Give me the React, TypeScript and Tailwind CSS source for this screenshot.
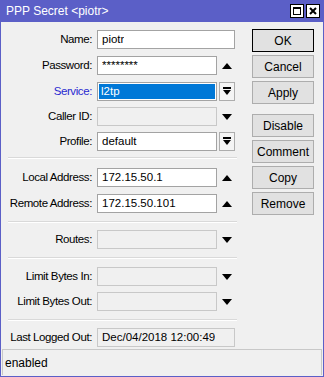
const font = { fontFamily: '"Liberation Sans", Arial, sans-serif' };

function Up() {
  return (
    <svg width="10" height="6" viewBox="0 0 10 6">
      <path d="M0 6 L5 0 L10 6 Z" fill="#000" />
    </svg>
  );
}

function Down() {
  return (
    <svg width="10" height="6" viewBox="0 0 10 6">
      <path d="M0 0 L10 0 L5 6 Z" fill="#000" />
    </svg>
  );
}

function DropBtn() {
  return (
    <div className="ml-[2px] w-[16px] h-full border border-[#adadad] bg-[#f4f4f4] flex items-center justify-center">
      <svg width="8" height="9" viewBox="0 0 8 9">
        <rect x="0" y="0" width="8" height="2" fill="#000" />
        <path d="M0 3 L8 3 L4 8 Z" fill="#000" />
      </svg>
    </div>
  );
}

type RowProps = {
  label: string;
  value?: string;
  kind: "edit" | "disabled" | "select" | "full" | "readonly" | "selected";
  arrow?: "up" | "down";
  blue?: boolean;
  className?: string;
};

function Row({ label, value, kind, arrow, blue, className }: RowProps) {
  const narrow = kind !== "full" && kind !== "readonly";
  const box =
    kind === "disabled" || kind === "readonly"
      ? "border-[#c8c8c8] bg-[#f0f0f0]"
      : "border-[#a3a3a3] bg-white";
  return (
    <div className={"flex items-center h-[19px] " + (className ?? "")}>
      <div
        className={
          "w-[92px] text-right pr-[1px] text-[11.5px] tracking-[-0.4px] " +
          (blue ? "text-[#2a2ad0]" : "text-black")
        }
      >
        {label}
      </div>
      <div
        className={
          "ml-[4px] h-full border flex items-center " +
          box +
          (narrow ? " w-[120px]" : " w-[138px]") +
          (kind === "selected" ? " p-[1px]" : " px-[4px]")
        }
      >
        {kind === "selected" ? (
          <div className="w-full h-full bg-[#0078d7] text-white px-[2px] flex items-center">{value}</div>
        ) : (
          <span className="truncate">{value}</span>
        )}
      </div>
      {kind === "selected" || kind === "select" ? (
        <DropBtn />
      ) : narrow ? (
        <div className="w-[19px] flex items-center justify-center">
          {arrow === "up" ? <Up /> : <Down />}
        </div>
      ) : null}
    </div>
  );
}

function Sep({ className }: { className?: string }) {
  return <div className={"ml-[7px] w-[229px] border-t border-[#d9d9d9] border-b border-b-white " + (className ?? "")} />;
}

function Btn({ label, primary, className }: { label: string; primary?: boolean; className?: string }) {
  return (
    <div
      className={
        "h-[23px] w-[62px] flex items-center justify-center bg-[#e1e1e1] border text-[12px] " +
        (primary ? "border-black" : "border-[#adadad]") +
        " " +
        (className ?? "")
      }
    >
      {label}
    </div>
  );
}

export default function App() {
  return (
    <div className="w-[324px] h-[377px] bg-[#5b5fc7] flex flex-col text-[11.5px] text-black" style={font}>
      {/* title bar */}
      <div className="h-[22px] flex items-center pl-[6px] pr-[4px] text-white text-[12px]">
        <span>PPP Secret &lt;piotr&gt;</span>
        <div className="ml-auto flex gap-[2px]">
          <div className="w-[14px] h-[14px] bg-white border border-black flex items-center justify-center">
            <div className="w-[8px] h-[8px] border border-black border-t-2" />
          </div>
          <div className="w-[14px] h-[14px] bg-white border border-black flex items-center justify-center">
            <svg width="8" height="8" viewBox="0 0 8 8">
              <path d="M1 1 L7 7 M7 1 L1 7" stroke="#000" strokeWidth="2" />
            </svg>
          </div>
        </div>
      </div>

      {/* body */}
      <div className="flex-1 mx-[1px] mb-[1px] bg-[#f0f0f0] flex flex-col">
        <div className="flex-1 flex pt-[7px]">
          <div className="w-[251px] flex flex-col pt-[1px]">
            <Row label="Name:" value="piotr" kind="full" />
            <Row label="Password:" value="********" kind="edit" arrow="up" className="mt-[7px]" />
            <Row label="Service:" value="l2tp" kind="selected" blue className="mt-[7px]" />
            <Row label="Caller ID:" kind="disabled" arrow="down" className="mt-[6px]" />
            <Row label="Profile:" value="default" kind="select" className="mt-[6px]" />
            <Sep className="mt-[6px]" />
            <Row label="Local Address:" value="172.15.50.1" kind="edit" arrow="up" className="mt-[9px]" />
            <Row label="Remote Address:" value="172.15.50.101" kind="edit" arrow="up" className="mt-[7px]" />
            <Sep className="mt-[8px]" />
            <Row label="Routes:" kind="disabled" arrow="down" className="mt-[7px]" />
            <Sep className="mt-[8px]" />
            <Row label="Limit Bytes In:" kind="disabled" arrow="down" className="mt-[8px]" />
            <Row label="Limit Bytes Out:" kind="disabled" arrow="down" className="mt-[6px]" />
            <Sep className="mt-[8px]" />
            <Row label="Last Logged Out:" value="Dec/04/2018 12:00:49" kind="readonly" className="mt-[7px]" />
          </div>
          <div className="flex flex-col">
            <Btn label="OK" primary />
            <Btn label="Cancel" className="mt-[3px]" />
            <Btn label="Apply" className="mt-[3px]" />
            <Btn label="Disable" className="mt-[10px]" />
            <Btn label="Comment" className="mt-[3px]" />
            <Btn label="Copy" className="mt-[3px]" />
            <Btn label="Remove" className="mt-[3px]" />
          </div>
        </div>
        <div className="h-[26px] mx-[1px] mb-[1px] border border-[#c8c8c8] border-b-0 flex items-center pl-[2px] text-[12px]">
          enabled
        </div>
      </div>
    </div>
  );
}
